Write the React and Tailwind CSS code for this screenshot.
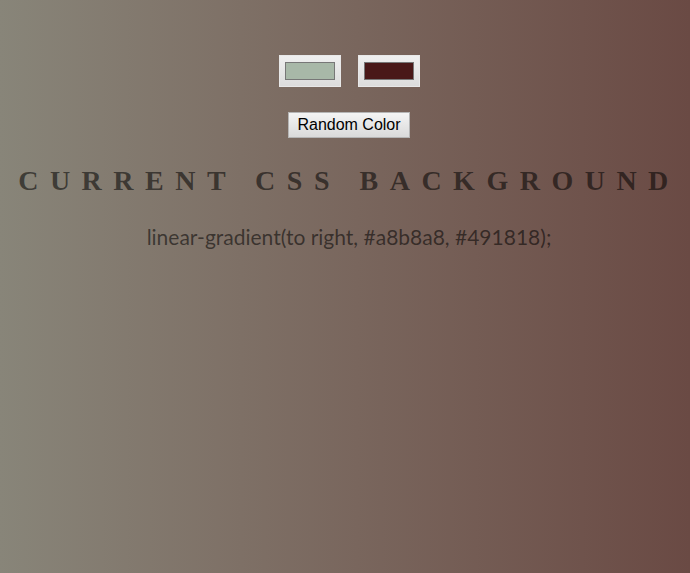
const swatches = ["#a8b8a8", "#491818"];

const ColorBox = ({ color }) => (
  <div className="w-[62px] h-[32px] px-[5px] py-[6px] bg-linear-to-b from-[#efefef] to-[#dcdcdc] border border-[#e8e8e8]">
    <div
      className="w-full h-full border border-[#777]"
      style={{ backgroundColor: color }}
    />
  </div>
);

export default function App() {
  return (
    <div className="min-h-[573px] w-full bg-linear-to-r from-[#888579] to-[#6a4a44] pl-2 pt-[55px] text-center">
      {/* Color pickers */}
      <div className="flex justify-center gap-[17px]">
        {swatches.map((c) => (
          <ColorBox key={c} color={c} />
        ))}
      </div>

      {/* Button */}
      <div className="mt-[25px] flex justify-center">
        <button className="h-[26px] px-[8px] bg-linear-to-b from-[#f4f4f4] to-[#dadada] border border-[#b5b5b5] text-[16px] leading-none text-black font-['Liberation_Sans',Arial,sans-serif]">
          Random Color
        </button>
      </div>

      {/* Heading */}
      <h1 className="mt-[26px] whitespace-nowrap text-[28px] leading-[34px] font-bold uppercase tracking-[11.5px] text-black/55 font-['Liberation_Serif','Times_New_Roman',serif]">
        Current CSS Background
      </h1>

      {/* Value */}
      <p className="mt-[26px] text-[21px] leading-[26px] text-black/55 font-['Lato',sans-serif]">
        linear-gradient(to right, #a8b8a8, #491818);
      </p>
    </div>
  );
}
